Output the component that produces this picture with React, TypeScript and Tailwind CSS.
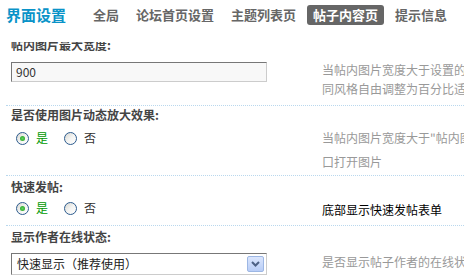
import React from "react";

const tabs = ["全局", "论坛首页设置", "主题列表页", "帖子内容页", "提示信息"];

function Radio({ checked }: { checked?: boolean }) {
  return (
    <span className="flex h-[13px] w-[13px] shrink-0 items-center justify-center rounded-full border border-[#2c5b8e] bg-gradient-to-br from-[#d6d6d0] via-[#f4f4f2] to-white">
      {checked && (
        <span className="h-[5px] w-[5px] rounded-full bg-[radial-gradient(circle,#5fd45f_0%,#1f9a1f_100%)]" />
      )}
    </span>
  );
}

function YesNo() {
  return (
    <div className="flex items-center pl-[5px] text-[12px]">
      <Radio checked />
      <span className="ml-[7px] text-[#009900]">是</span>
      <span className="ml-[16px]">
        <Radio />
      </span>
      <span className="ml-[7px] text-[#333]">否</span>
    </div>
  );
}

export default function App() {
  return (
    <div
      className="h-[278px] w-[464px] overflow-hidden bg-white text-[12px] text-[#333]"
      style={{ fontFamily: '"Noto Sans CJK SC", "Liberation Sans", sans-serif' }}
    >
      {/* header */}
      <div className="flex h-[42px] items-start pl-[6px] pt-[5px]">
        <span className="mr-[21px] text-[15px] font-bold leading-[20px] text-[#0a93c8]">
          界面设置
        </span>
        <div className="flex gap-[5px]">
          {tabs.map((t) =>
            t === "帖子内容页" ? (
              <span
                key={t}
                className="rounded-[3px] bg-[#666] px-[6px] text-[13px] font-bold leading-[20px] text-white"
              >
                {t}
              </span>
            ) : (
              <span key={t} className="px-[6px] text-[13px] font-bold leading-[20px] text-[#666]">
                {t}
              </span>
            )
          )}
        </div>
      </div>

      <div className="pl-[6px]">
        {/* row 1 */}
        <div className="flex h-[10px] flex-col justify-end overflow-hidden pl-[5px]">
          <span className="font-bold leading-[14px] text-[#444]">帖内图片最大宽度:</span>
        </div>
        <div className="grid h-[53px] grid-cols-[311px_1fr] pl-[5px] pt-[8px]">
          <div className="pt-[2px]">
            <div className="flex h-[20px] w-[256px] items-center border border-b-[#ccc] border-l-[#777] border-r-[#ccc] border-t-[#777] bg-[#f8f8f8] pl-[4px] text-[12px] text-[#333]">
              900
            </div>
          </div>
          <div className="overflow-hidden whitespace-nowrap leading-[19px] text-[#999]">
            <div>当帖内图片宽度大于设置的值时，</div>
            <div>同风格自由调整为百分比适应</div>
          </div>
        </div>

        {/* row 2 */}
        <div className="border-t border-dotted border-[#b9d8ee]">
          <div className="pl-[5px] font-bold leading-[18px] text-[#444]">是否使用图片动态放大效果:</div>
          <div className="grid h-[51px] grid-cols-[311px_1fr] pl-[5px]">
            <div className="flex h-[26px] items-center pt-[2px]">
              <YesNo />
            </div>
            <div className="overflow-hidden whitespace-nowrap pt-[2px] leading-[24px] text-[#999]">
              <div>当帖内图片宽度大于"帖内图片最大宽度"时</div>
              <div>口打开图片</div>
            </div>
          </div>
        </div>

        {/* row 3 */}
        <div className="border-t border-dotted border-[#b9d8ee]">
          <div className="pl-[5px] font-bold leading-[22px] text-[#444]">快速发帖:</div>
          <div className="grid h-[27px] grid-cols-[311px_1fr] pl-[5px]">
            <div className="flex h-[20px] items-center">
              <YesNo />
            </div>
            <div className="overflow-hidden whitespace-nowrap pt-[2px] leading-[20px] text-black">
              底部显示快速发帖表单
            </div>
          </div>
        </div>

        {/* row 4 */}
        <div className="border-t border-dotted border-[#b9d8ee]">
          <div className="pl-[5px] font-bold leading-[22px] text-[#444]">显示作者在线状态:</div>
          <div className="grid grid-cols-[311px_1fr] pl-[5px]">
            <div className="pt-[5px]">
              <div className="flex h-[22px] w-[256px] items-center justify-between border border-b-[#ccc] border-l-[#777] border-r-[#ccc] border-t-[#777] bg-white pl-[5px] pr-[2px]">
                <span className="text-[12px] text-[#222]">快速显示（推荐使用）</span>
                <span className="flex h-[16px] w-[17px] items-center justify-center rounded-[2px] border border-[#9db7e4] bg-gradient-to-b from-[#dbe6fd] to-[#b8cdf6]">
                  <svg width="9" height="6" viewBox="0 0 9 6">
                    <path d="M1 1 L4.5 4.5 L8 1" fill="none" stroke="#4d6185" strokeWidth="2" />
                  </svg>
                </span>
              </div>
            </div>
            <div className="overflow-hidden whitespace-nowrap pt-[4px] leading-[19px] text-[#999]">
              是否显示帖子作者的在线状态
            </div>
          </div>
        </div>
      </div>
    </div>
  );
}
